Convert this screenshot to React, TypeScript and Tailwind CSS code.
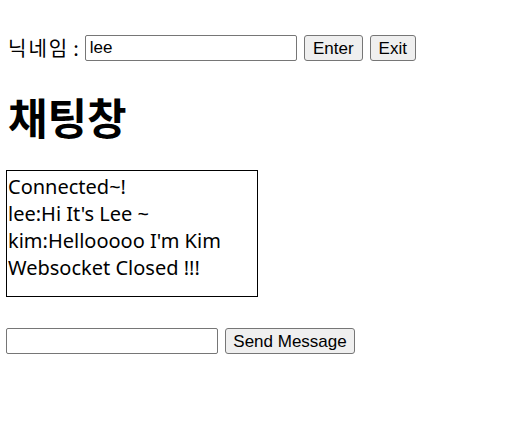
import React, { useState } from 'react';

const App: React.FC = () => {
  const [nick, setNick] = useState('lee');
  const [msg, setMsg] = useState('');
  const messages = ['Connected~!', "lee:Hi It's Lee ~", "kim:Hellooooo I'm Kim", 'Websocket Closed !!!'];

  return (
    <div className="min-h-screen bg-white text-black px-[6px] pt-[35px] font-['Noto_Sans','Noto_Sans_CJK_KR',sans-serif]">
      {/* Nickname */}
      <div className="flex items-center h-[26px]">
        <span className="text-[20px] ml-[2px] tracking-[2px] font-['Noto_Sans_CJK_KR',sans-serif]">닉네임</span>
        <span className="text-[20px] ml-[4px] mr-[6px] font-['Noto_Sans_CJK_KR',sans-serif]">:</span>
        <input
          value={nick}
          onChange={(e) => setNick(e.target.value)}
          className="w-[212px] h-[26px] border border-[#767676] rounded-[2px] px-[4px] text-[17px] font-['Liberation_Sans',Arial,sans-serif] outline-none"
        />
        <button className="ml-[7px] h-[26px] w-[59px] bg-[#efefef] border border-[#767676] rounded-[3px] text-[17px] font-['Liberation_Sans',Arial,sans-serif]">
          Enter
        </button>
        <button className="ml-[7px] h-[26px] w-[46px] bg-[#efefef] border border-[#767676] rounded-[3px] text-[17px] font-['Liberation_Sans',Arial,sans-serif]">
          Exit
        </button>
      </div>

      <h1 className="mt-[30px] ml-[2px] text-[43px] font-bold leading-[50px] font-['Noto_Sans_CJK_KR',sans-serif]">채팅창</h1>

      {/* Chat log */}
      <div className="mt-[29px] w-[252px] h-[127px] border border-black pl-[1px] pt-[2px]">
        {messages.map((m, i) => (
          <div key={i} className="text-[20px] leading-[27px]">{m}</div>
        ))}
      </div>

      {/* Send */}
      <div className="flex items-center mt-[31px]">
        <input
          value={msg}
          onChange={(e) => setMsg(e.target.value)}
          className="w-[212px] h-[26px] border border-[#767676] rounded-[2px] px-[4px] text-[17px] font-['Liberation_Sans',Arial,sans-serif] outline-none"
        />
        <button className="ml-[7px] h-[26px] w-[130px] bg-[#efefef] border border-[#767676] rounded-[3px] text-[17px] font-['Liberation_Sans',Arial,sans-serif]">
          Send Message
        </button>
      </div>
    </div>
  );
};

export default App;
